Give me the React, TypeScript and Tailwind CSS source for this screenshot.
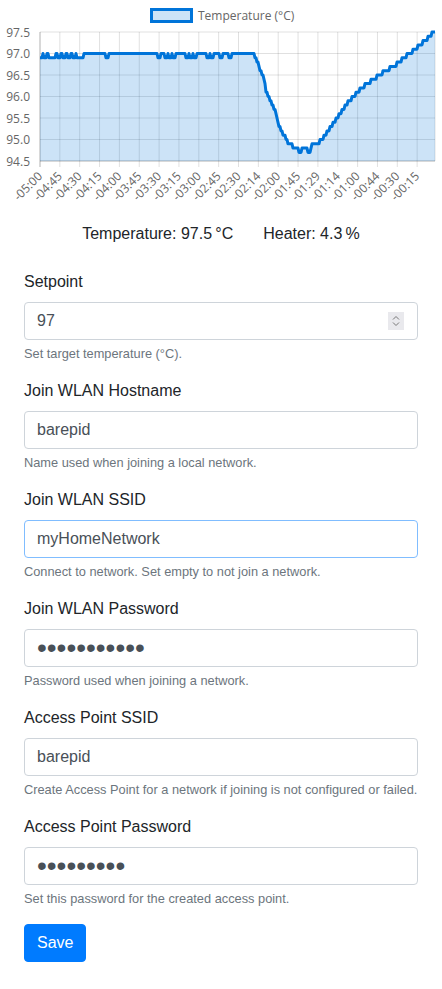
import React from "react";

const X0 = 40;
const X1 = 435;
const Y0 = 32;
const YB = 161;
const PX = 43; // px per degree

const yOf = (v: number) => Y0 + (97.5 - v) * PX;

const dips: [number, number][] = [
  [40, 42], [44, 46], [49, 55], [58, 60], [63, 65], [68, 70], [73, 75], [77, 83],
  [106, 108], [158, 160], [165, 167], [169, 171], [173, 175], [186, 188], [190, 192],
  [194, 196], [207, 209], [211, 213], [220, 222], [229, 231],
];

const anchors: [number, number][] = [
  [253, 97.0], [257, 96.84], [260, 96.6], [264, 96.4], [266, 96.1], [269, 96.0],
  [272, 95.8], [275, 95.65], [278, 95.4], [282, 95.15], [285, 95.05], [288, 94.9],
  [292, 94.85], [296, 94.8], [300, 94.72], [304, 94.8], [308, 94.8], [312, 94.85],
  [321, 94.97], [336, 95.45], [348, 95.87], [362, 96.2], [378, 96.48], [394, 96.71],
  [408, 96.97], [420, 97.2], [432, 97.45], [435, 97.5],
];

function valueAt(x: number) {
  if (x < 253) {
    return dips.some(([a, b]) => x >= a && x <= b) ? 96.9 : 97.0;
  }
  if (x >= 299 && x <= 301) return 94.7;
  if (x >= 308 && x <= 310) return 94.7;
  for (let i = 0; i < anchors.length - 1; i++) {
    const [xa, va] = anchors[i];
    const [xb, vb] = anchors[i + 1];
    if (x >= xa && x <= xb) {
      const v = va + ((x - xa) / (xb - xa)) * (vb - va);
      return Math.round(v * 10) / 10;
    }
  }
  return 97.5;
}

const points: [number, number][] = [];
for (let x = X0; x <= X1; x++) points.push([x, yOf(valueAt(x))]);

const linePath = points.map(([x, y], i) => `${i ? "L" : "M"}${x},${y.toFixed(1)}`).join(" ");
const areaPath = `M${X0},${YB} ` + points.map(([x, y]) => `L${x},${y.toFixed(1)}`).join(" ") + ` L${X1},${YB} Z`;

const yTicks = [97.5, 97.0, 96.5, 96.0, 95.5, 95.0, 94.5];
const xLabels = [
  "-05:00", "-04:45", "-04:30", "-04:15", "-04:00", "-03:45", "-03:30", "-03:15",
  "-03:00", "-02:45", "-02:30", "-02:14", "-02:00", "-01:45", "-01:29", "-01:14",
  "-01:00", "-00:44", "-00:30", "-00:15",
];
const STEP = 19.85;

function Chart() {
  return (
    <svg width={442} height={210} className="block" style={{ fontFamily: "'Open Sans', sans-serif" }}>
      {/* legend */}
      <rect x={151.5} y={9.5} width={40} height={12} fill="rgba(0,116,217,0.2)" stroke="#0074d9" strokeWidth={3} />
      <text x={198} y={19.5} fontSize={12} fill="#666">
        Temperature (°C)
      </text>

      {/* grid */}
      {yTicks.map((t) => (
        <g key={t}>
          <line x1={X0} x2={X1} y1={yOf(t)} y2={yOf(t)} stroke="rgba(0,0,0,0.12)" />
          <text x={30} y={yOf(t) + 4.5} fontSize={12} fill="#666" textAnchor="end">
            {t.toFixed(1)}
          </text>
        </g>
      ))}
      {xLabels.map((l, i) => {
        const x = X0 + i * STEP;
        return (
          <g key={l}>
            <line x1={x} x2={x} y1={Y0} y2={YB + 6} stroke="rgba(0,0,0,0.12)" />
            <text x={x + 3} y={177} fontSize={12} fill="#666" textAnchor="end" transform={`rotate(-45 ${x + 3} 177)`}>
              {l}
            </text>
          </g>
        );
      })}
      <line x1={X1} x2={X1} y1={Y0} y2={YB} stroke="rgba(0,0,0,0.12)" />
      <line x1={X0} x2={X0} y1={Y0} y2={YB + 6} stroke="rgba(0,0,0,0.2)" />
      <line x1={X0} x2={X1} y1={YB} y2={YB} stroke="rgba(0,0,0,0.2)" />

      {/* data */}
      <path d={areaPath} fill="rgba(0,116,217,0.2)" />
      <path d={linePath} fill="none" stroke="#0074d9" strokeWidth={3} strokeLinejoin="round" />
    </svg>
  );
}

type Field = {
  label: string;
  type: string;
  value: string;
  help: string;
  focused?: boolean;
};

const fields: Field[] = [
  { label: "Setpoint", type: "number", value: "97", help: "Set target temperature (°C)." },
  { label: "Join WLAN Hostname", type: "text", value: "barepid", help: "Name used when joining a local network." },
  { label: "Join WLAN SSID", type: "text", value: "myHomeNetwork", help: "Connect to network. Set empty to not join a network.", focused: true },
  { label: "Join WLAN Password", type: "password", value: "xxxxxxxxxxx", help: "Password used when joining a network." },
  { label: "Access Point SSID", type: "text", value: "barepid", help: "Create Access Point for a network if joining is not configured or failed." },
  { label: "Access Point Password", type: "password", value: "xxxxxxxxx", help: "Set this password for the created access point." },
];

function Spinner() {
  return (
    <div className="absolute right-[14px] top-[10px] flex h-[18px] w-[16px] flex-col items-center justify-center bg-[#e9e9ed]">
      <svg width="8" height="5" viewBox="0 0 8 5" className="mb-[2px]">
        <path d="M1 4.5 L4 1.5 L7 4.5" fill="none" stroke="#777" strokeWidth="1" />
      </svg>
      <svg width="8" height="5" viewBox="0 0 8 5">
        <path d="M1 0.5 L4 3.5 L7 0.5" fill="none" stroke="#777" strokeWidth="1" />
      </svg>
    </div>
  );
}

export default function App() {
  return (
    <div className="min-h-screen bg-white font-['Liberation_Sans',Arial,sans-serif] text-[#212529]">
      <Chart />

      {/* Status */}
      <div className="mt-[12px] flex justify-center gap-[30px] text-base leading-6">
        <span>Temperature: 97.5{"\u2009"}°C</span>
        <span>Heater: 4.3{"\u2009"}%</span>
      </div>

      {/* Settings */}
      <form className="mt-6 px-6" onSubmit={(e) => e.preventDefault()}>
        {fields.map((f) => (
          <div key={f.label} className="mb-4">
            <label className="block mb-2 text-base leading-6">{f.label}</label>
            <div className="relative">
              <input
                type={f.type}
                defaultValue={f.value}
                className={`block w-full h-[38px] px-3 rounded border bg-white text-[#495057] outline-none [appearance:textfield] [&::-webkit-inner-spin-button]:appearance-none ${
                  f.type === "password" ? "text-[28px] leading-none" : "text-base"
                } ${f.focused ? "border-[#80bdff]" : "border-[#ced4da]"}`}
              />
              {f.type === "number" && <Spinner />}
            </div>
            <small className="block mt-1 text-[12.8px] leading-[19px] text-[#6c757d]">{f.help}</small>
          </div>
        ))}
        <button
          type="submit"
          className="h-[38px] px-3 rounded border border-[#007bff] bg-[#007bff] text-base text-white"
        >
          Save
        </button>
      </form>
    </div>
  );
}
